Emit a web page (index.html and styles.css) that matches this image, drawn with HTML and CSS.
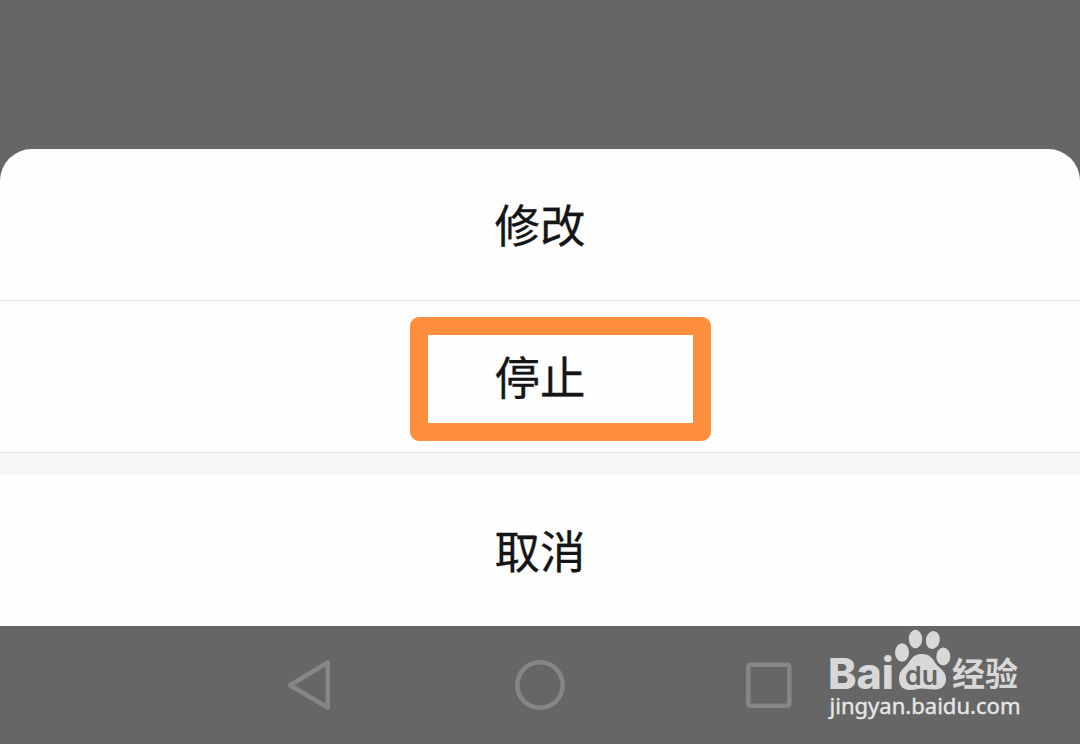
FILE: index.html
```html
<!DOCTYPE html>
<html lang="zh-CN">
<head>
    <meta charset="UTF-8">
    <meta name="viewport" content="width=device-width, initial-scale=1.0">
    <title>修改</title>
    <link rel="stylesheet" href="styles.css">
</head>
<body>

<div class="screen">
    <div class="sheet">
        <button class="sheet-button">修改</button>
        <button class="sheet-button">
            停止
            <span class="highlight"></span>
        </button>
        <div class="sheet-gap"></div>
        <button class="sheet-button cancel">取消</button>
    </div>

    <div class="nav-bar">
        <svg class="nav-icon" viewBox="0 0 50 54">
            <path d="M4 27.200 L41.800 4.500 V49.500 Z"/>
        </svg>
        <svg class="nav-icon" viewBox="0 0 50 54">
            <circle cx="25" cy="27" r="22.7"/>
        </svg>
        <svg class="nav-icon" viewBox="0 0 50 54">
            <rect x="4.300" y="6.800" width="41" height="41" rx="2"/>
        </svg>
    </div>

    <svg class="watermark" viewBox="0 0 210 110">
        <text class="logo-bai" x="8" y="68.500" textLength="66" lengthAdjust="spacingAndGlyphs">Bai</text>
        <ellipse cx="82" cy="32.500" rx="7" ry="9.300"/>
        <ellipse cx="95.500" cy="19" rx="6.700" ry="9.300"/>
        <ellipse cx="112.800" cy="20" rx="6.900" ry="9" transform="rotate(10 112.800 20)"/>
        <ellipse cx="123.300" cy="36.500" rx="7" ry="9"/>
        <path d="M102 34 C110 34 113 39 116 44 C120 49 126 51 126 59 C126 66 121 70 114 69.500 C109 69.500 106 68.500 102 68.500 C98 68.500 95 70 90 70 C82 70 79 65 79 58 C79 50 85 48 89 42 C93 36 96 34 102 34 Z"/>
        <text class="logo-du" x="85" y="64.500" textLength="33" lengthAdjust="spacingAndGlyphs">du</text>
        <text class="logo-name" x="132" y="65.500" textLength="66" lengthAdjust="spacingAndGlyphs">经验</text>
        <text class="logo-url" x="9.500" y="94" textLength="191" lengthAdjust="spacingAndGlyphs">jingyan.baidu.com</text>
    </svg>
</div>

</body>
</html>
```
FILE: styles.css
```css
body {
    margin: 0;
    background: #666;
    font-family: "Noto Sans CJK SC", sans-serif;
}
.screen {
    position: relative;
    box-sizing: border-box;
    height: 744px;
    padding-top: 149px;
    overflow: hidden;
}
.sheet {
    display: flex;
    flex-direction: column;
    background: #fefefe;
    border-radius: 32px 32px 0 0;
    overflow: hidden;
}
.sheet-button {
    position: relative;
    box-sizing: border-box;
    height: 152px;
    padding: 0 0 2px;
    border: none;
    border-bottom: 1px solid #e2e2e2;
    background: none;
    color: #151515;
    font-family: inherit;
    font-size: 45.5px;
    line-height: 149px;
    text-align: center;
    -webkit-text-stroke: 0.3px #151515;
}
.sheet-button.cancel {
    height: 151px;
    border-bottom: none;
}
.sheet-gap {
    height: 22px;
    background: #f7f7f7;
}
.highlight {
    position: absolute;
    top: 16px;
    left: 410px;
    box-sizing: border-box;
    width: 301px;
    height: 124px;
    border: 18px solid #ff8f3c;
    border-radius: 9px;
}
.nav-bar {
    display: flex;
    justify-content: center;
    gap: 179px;
    height: 118px;
    padding-top: 32px;
    box-sizing: border-box;
}
.nav-icon {
    width: 50px;
    height: 54px;
    fill: none;
    stroke: #868686;
    stroke-width: 4.5;
    stroke-linejoin: round;
}
.watermark {
    position: absolute;
    top: 620px;
    left: 820px;
    width: 210px;
    height: 110px;
    overflow: visible;
    fill: #d8d8d8;
}
.logo-bai {
    font: 800 43px Inter, sans-serif;
}
.logo-du {
    font: 600 26px Inter, sans-serif;
    fill: #666;
}
.logo-name {
    font: bold 33px "Noto Sans CJK SC", sans-serif;
}
.logo-url {
    font: 22px "Noto Sans", sans-serif;
    fill: #e6e6e6;
    stroke: #e6e6e6;
    stroke-width: 0.4;
}
```
